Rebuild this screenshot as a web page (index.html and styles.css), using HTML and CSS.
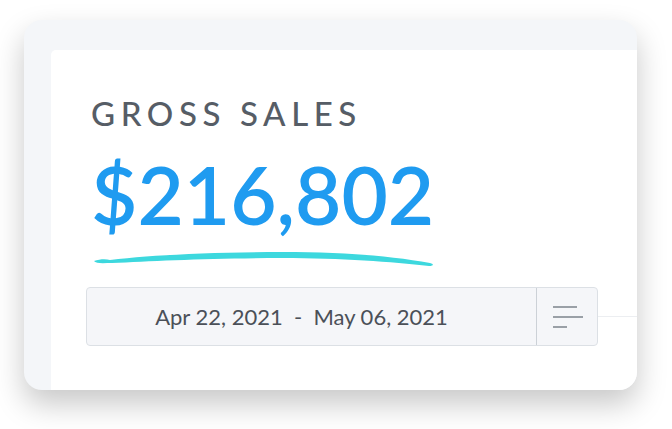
FILE: index.html
```html
<!DOCTYPE html>
<html lang="en">
<head>
    <meta charset="UTF-8">
    <meta name="viewport" content="width=device-width, initial-scale=1.0">
    <title>Gross Sales</title>
    <link rel="stylesheet" href="styles.css">
</head>
<body>
    <div class="card">
        <div class="panel">
            <h2 class="label">GROSS SALES</h2>
            <div class="amount">$216,802</div>
            <svg class="brush" width="344" height="20" viewBox="0 0 344 20">
                <path d="M2 12 C 8 10, 14 10, 18 11 C 60 6, 120 3, 190 3 C 250 3, 300 7, 338 14 C 342 15, 342 17, 337 17 C 300 13, 250 9, 190 9 C 120 9, 60 12, 20 14 C 12 14, 4 15, 2 12 Z" fill="#3dd8de"/>
            </svg>
            <div class="row">
                <div class="range">
                    <div class="dates">Apr 22, 2021&nbsp;&nbsp;-&nbsp;&nbsp;May 06, 2021</div>
                    <button class="sort">
                        <svg width="32" height="26" viewBox="0 0 32 26">
                            <line x1="1" y1="3" x2="25" y2="3"/>
                            <line x1="1" y1="13" x2="31" y2="13"/>
                            <line x1="1" y1="23" x2="15" y2="23"/>
                        </svg>
                    </button>
                </div>
                <div class="rule"></div>
            </div>
        </div>
    </div>
</body>
</html>
```

FILE: styles.css
```css
body {
    margin: 0;
    padding: 20px 0 39px 24px;
    background-color: #fff;
    font-family: Lato, "Open Sans", sans-serif;
}
.card {
    width: 613px;
    height: 370px;
    box-sizing: border-box;
    padding: 30px 0 0 27px;
    background-color: #f4f6f9;
    border-radius: 18px;
    box-shadow: 0 14px 30px rgba(0, 0, 0, 0.22);
    overflow: hidden;
}
.panel {
    height: 100%;
    box-sizing: border-box;
    padding: 45px 0 0 40px;
    background-color: #fff;
    border-top-left-radius: 5px;
}
.label {
    margin: 0;
    font-size: 33px;
    line-height: 36px;
    font-weight: 500;
    letter-spacing: 5.6px;
    color: #565d66;
}
.amount {
    margin-top: 18px;
    font-size: 80px;
    line-height: 90px;
    font-weight: 600;
    color: #1f9bf0;
}
.brush {
    display: block;
    margin: 10px 0 0 1px;
}
.row {
    display: flex;
    align-items: center;
    margin: 18px 0 0 -5px;
}
.range {
    display: flex;
    width: 512px;
    height: 59px;
    box-sizing: border-box;
    background-color: #f5f6f9;
    border: 1px solid #dce0e5;
    border-radius: 4px;
}
.dates {
    flex: 1;
    display: flex;
    align-items: center;
    justify-content: center;
    font-size: 22px;
    color: #4b5058;
    padding-right: 20px;
}
.sort {
    width: 61px;
    border: none;
    border-left: 1px solid #ccd1d7;
    background: none;
    padding: 0 0 0 15px;
    display: flex;
    align-items: center;
}
.sort line {
    stroke: #9aa0a7;
    stroke-width: 2;
}
.rule {
    flex: 1;
    height: 1px;
    background-color: #eceef1;
}
```
